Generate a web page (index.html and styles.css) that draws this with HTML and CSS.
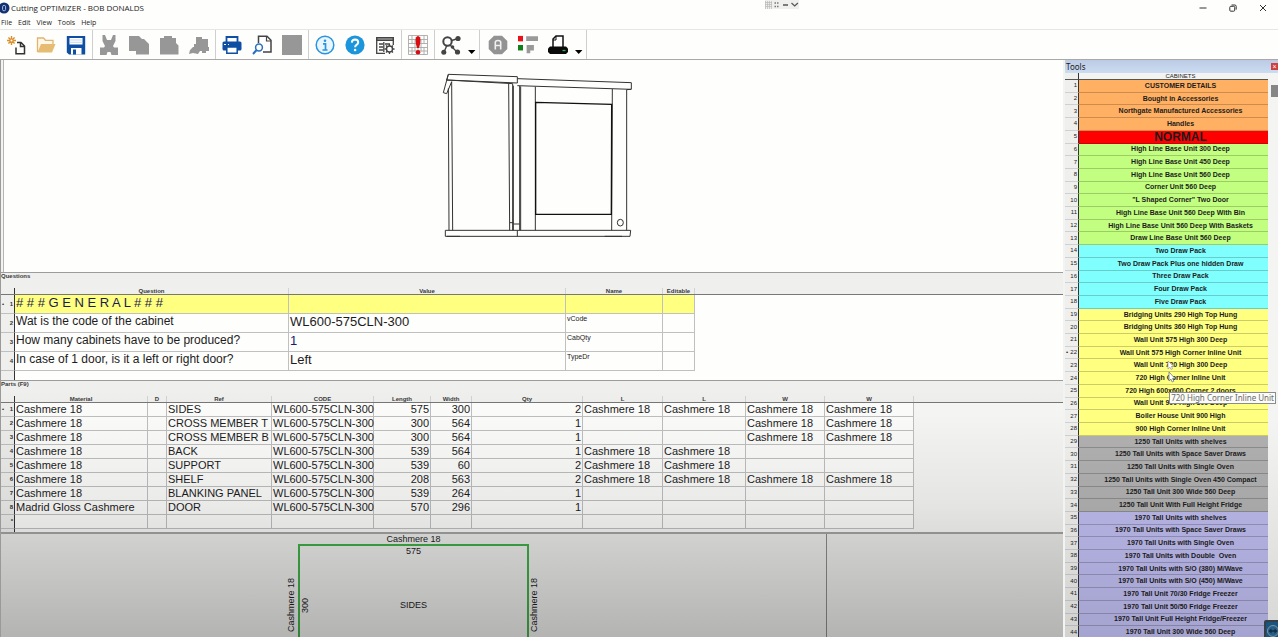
FILE: index.html
```html
<!DOCTYPE html>
<html lang="en">
<head>
<meta charset="utf-8">
<title>Cutting OPTIMIZER - BOB DONALDS</title>
<link rel="stylesheet" href="styles.css">
</head>
<body>
<header class="titlebar">
  <svg class="app-icon" viewBox="0 0 12 12" aria-hidden="true"><circle cx="4" cy="6" r="5.500" fill="#16306e"/><rect x="2.600" y="3.400" width="3" height="5.400" rx="1.400" fill="none" stroke="#9fc0f0" stroke-width="1"/></svg>
  <h1 class="app-title">Cutting OPTIMIZER - BOB DONALDS</h1>
  <div class="share-bar">
    <svg viewBox="0 0 34 9" aria-hidden="true"><rect width="34" height="9" fill="#efefee"/><path d="M.5 1v8M2.500 1v8M4.500 1v8M6.500 1v8M0 2.500h7M0 4.500h7M0 6.500h7" stroke="#b9b9b9" stroke-width=".7"/><path d="M9.500 3h1.500M12 3h1.500M9.500 6.500h1.500M12 6.500h1.500" stroke="#777" stroke-width="1.300"/><path d="M18 5h5" stroke="#555" stroke-width="1.500"/><path d="M26.500 3l3.200 3 3.200-3" fill="none" stroke="#555" stroke-width="1.200"/></svg>
  </div>
  <div class="window-buttons">
    <button class="win-btn" type="button" aria-label="Minimize"><svg viewBox="0 0 8 8"><path d="M.5 4h7" stroke="#333"/></svg></button>
    <button class="win-btn" type="button" aria-label="Restore"><svg viewBox="0 0 8 8" fill="none" stroke="#333"><rect x=".8" y="2.300" width="4.900" height="4.900" rx="1"/><path d="M2.500 1h3.300q1.400 0 1.400 1.400v3.200"/></svg></button>
    <button class="win-btn" type="button" aria-label="Close"><svg viewBox="0 0 8 8"><path d="M1 1l6 6M7 1l-6 6" stroke="#333"/></svg></button>
  </div>
</header>
<nav class="menubar">
  <button type="button">File</button><button type="button">Edit</button><button type="button">View</button><button type="button">Tools</button><button type="button">Help</button>
</nav>
<div class="toolbar" role="toolbar">
  <div class="tool-group">
    <button class="tool" type="button" aria-label="New"><svg viewBox="0 0 20 20"><path d="M10 12.500V18.700h8.500V11l-3.500-3.500h-4M14.500 8v3.500h4" fill="none" stroke="#333" stroke-width="1.500"/><path d="M5.500 1v9M1 5.500h9M2.400 2.400l6.200 6.200M8.600 2.400L2.400 8.600" stroke="#d98f2b" stroke-width="1.400"/><circle cx="5.500" cy="5.500" r="1" fill="#fff"/></svg></button>
    <button class="tool" type="button" aria-label="Open"><svg viewBox="0 0 20 20"><path d="M1.500 17V3h6l2 2.300h7.500V9" fill="#fff8ea" stroke="#e0b56c" stroke-width="1.300"/><path d="M1.500 17.500L5 9h14.500L16 17.500z" fill="#e6bb72"/></svg></button>
    <button class="tool" type="button" aria-label="Save"><svg viewBox="0 0 20 20"><path d="M.8 1h18.400v18.500H3L.8 17.500z" fill="#0f4fa3"/><path d="M3.500 3h13v6.500h-13z" fill="#fff"/><path d="M3.500 5h13M3.500 7.300h13" stroke="#b9cfe8" stroke-width=".8"/><path d="M5 13h10.500v6.500H5z" fill="#fff"/><path d="M7 14.500h3v5H7z" fill="#0f4fa3"/></svg></button>
  </div>
  <div class="tool-group">
    <button class="tool" type="button" disabled aria-label="Cut"><svg viewBox="0 0 20 20"><path d="M3.500 0H6l2 5h4l2-5h2.500v6l-2.500 5 1 1.500h4V20h-6.500l-1-3h-3l-1 3H1v-7.500h4L6 11 3.500 6z" fill="#979797"/></svg></button>
    <button class="tool" type="button" disabled aria-label="Copy"><svg viewBox="0 0 20 20"><path d="M0 1h10l3 3h2l5 5v10.500H7V16H0z" fill="#979797"/></svg></button>
    <button class="tool" type="button" disabled aria-label="Paste"><svg viewBox="0 0 20 20"><path d="M1 3h4V1h8v2h4v5l2.500 2.500v9H1z" fill="#979797"/></svg></button>
    <button class="tool" type="button" disabled aria-label="Format painter"><svg viewBox="0 0 20 20"><path d="M7 2h6v2h6v8h1v4h-3v2h-4v-2h-2l-2 3-5-1-4 1 1-4 3-3h1V9h2z" fill="#979797"/></svg></button>
  </div>
  <div class="tool-group">
    <button class="tool" type="button" aria-label="Print"><svg viewBox="0 0 20 20"><path d="M4.500 7V2h11v5" fill="#fff" stroke="#0f4fa3" stroke-width="1.800"/><rect x=".5" y="6.500" width="19" height="9" rx="1.500" fill="#0f4fa3"/><path d="M2 9.500h2M6 9.500h1" stroke="#fff" stroke-width="1.200"/><path d="M4.800 12h10.400v6.200H4.800z" fill="#fff" stroke="#0f4fa3" stroke-width="1.500"/></svg></button>
    <button class="tool" type="button" aria-label="Print preview"><svg viewBox="0 0 20 20"><path d="M6.500 8V1.300h8.500l4 4V17H11" fill="#fff" stroke="#444" stroke-width="1.500"/><path d="M14.500 1.500V6H19" fill="none" stroke="#444" stroke-width="1.200"/><circle cx="7" cy="12.500" r="3.400" fill="#fff" stroke="#2a6fc0" stroke-width="1.500"/><path d="M4.600 15L1 19" stroke="#2a6fc0" stroke-width="2"/></svg></button>
    <button class="tool" type="button" disabled aria-label="Export"><svg viewBox="0 0 20 20"><path d="M0 0h20v20H0z" fill="#979797"/></svg></button>
  </div>
  <div class="tool-group">
    <button class="tool" type="button" aria-label="Information"><svg viewBox="0 0 20 20"><circle cx="10" cy="10" r="8.800" fill="#e9f6fd" stroke="#2a95dc" stroke-width="1.500"/><circle cx="10" cy="5.800" r="1.300" fill="#2a95dc"/><path d="M8 8.800h2.500v6M7.500 15h5" fill="none" stroke="#2a95dc" stroke-width="1.700"/></svg></button>
    <button class="tool" type="button" aria-label="Help"><svg viewBox="0 0 20 20"><circle cx="10" cy="10" r="9.600" fill="#1b95dc"/><path d="M6.800 7.600q.2-3 3.300-3 3.100.1 3.100 2.700 0 1.500-1.700 2.600-1.400.9-1.400 2.400" fill="none" stroke="#fff" stroke-width="2"/><circle cx="10.100" cy="15" r="1.300" fill="#fff"/></svg></button>
    <button class="tool" type="button" aria-label="Table settings"><svg viewBox="0 0 20 20"><path d="M1 2h18v4H1z" fill="#444"/><path d="M2.500 4h15" stroke="#ddd" stroke-width=".8"/><path d="M18.300 6v4M1.700 6v12.300H10M4 9h4M10 9h5M4 12h4M4 15h4M8.800 7v10" fill="none" stroke="#444" stroke-width="1.300"/><circle cx="14.500" cy="14" r="3" fill="#fff" stroke="#444" stroke-width="1.400"/><path d="M14.500 9v2M14.500 17v2M9.500 14h2M17.500 14h2M11 10.500l1.300 1.300M16.700 16.200l1.300 1.300M11 17.500l1.300-1.300M16.700 11.800l1.300-1.300" stroke="#444" stroke-width="1.300"/></svg></button>
  </div>
  <div class="tool-group">
    <button class="tool" type="button" aria-label="Errors"><svg viewBox="0 0 20 20"><path d="M.5 .5h19v19H.5zM.5 4.500h19M.5 8.500h19M.5 12.500h19M.5 16h19M4 .5v8M7 4.500v12M4 12.500v7M16 .5v8M13 4.500v12M16 12.500v7M10 8v11" fill="none" stroke="#a9a9a9" stroke-width=".9"/><path d="M7.800 2.500Q10-.5 12.200 2.500 13 8 11 13H9Q7 8 7.800 2.500z" fill="#d80d12"/><circle cx="10" cy="17.200" r="2.300" fill="#d80d12"/></svg></button>
  </div>
  <div class="tool-group">
    <button class="tool" type="button" aria-label="Connections"><svg viewBox="0 0 20 20"><path d="M6 7l11-3.500M6 7l10 10M7 8L3 17" stroke="#444" stroke-width="1.400"/><circle cx="6.500" cy="6.500" r="4.200" fill="#fff" stroke="#444" stroke-width="2"/><circle cx="17" cy="3.500" r="2.600" fill="#444"/><circle cx="16.500" cy="17" r="2.600" fill="#444"/><circle cx="2.800" cy="17.200" r="2.500" fill="#444"/><circle cx="11.500" cy="12" r="1.800" fill="#444"/></svg></button>
    <button class="caret" type="button" aria-label="More connections"><svg viewBox="0 0 8 4"><path d="M0 0h7.400L3.700 4z"/></svg></button>
  </div>
  <div class="tool-group tool-group-wide">
    <button class="tool" type="button" disabled aria-label="Automatic"><svg viewBox="0 0 20 20"><path d="M6 .7h8L19.300 6v8L14 19.300H6L.7 14V6z" fill="#939393"/><path d="M7.300 14.500V7.500q0-2 2.700-2t2.700 2v7M7.300 10.500h5.400" fill="none" stroke="#f1f1f1" stroke-width="1.600"/></svg></button>
    <button class="tool" type="button" aria-label="Labels"><svg viewBox="0 0 22 20"><path d="M0 0h5.500v6H0z" fill="#e8121b"/><path d="M0 10h5.500v6H0z" fill="#128018"/><path d="M9 .5h13v5H9zM9.500 10h8v6h-4v3h-4z" fill="#9a9a9a"/></svg></button>
    <button class="tool" type="button" aria-label="Label printer"><svg viewBox="0 0 20 20"><path d="M5 12V4l3-3h7v11" fill="#fff" stroke="#111" stroke-width="1.500"/><path d="M5 5h3V1" fill="none" stroke="#111"/><path d="M2 11.500h16l2 2V17l-2 2H2l-2-2v-3.500z" fill="#0a0a0a"/><path d="M14.500 15.500h3" stroke="#3fb04f" stroke-width="1.300"/></svg></button>
    <button class="caret" type="button" aria-label="More printers"><svg viewBox="0 0 8 4"><path d="M0 0h7.400L3.700 4z"/></svg></button>
  </div>
</div>

<div class="workspace">
  <main class="main">
    <section class="viewer" aria-label="Cabinet view">
      <svg class="cabinet" viewBox="0 0 660 570" fill="none" stroke="#333" stroke-width="3" aria-hidden="true">
        <path d="M55 43L262 50V69L50 60zM55 43L40 98L50 101L65 65M262 56L604 68V88L262 77M50 60L248 71" />
        <path d="M55 85L57 511M65 65L68 511" />
        <path d="M236 70L239 511M248 71V511M250 77V511M269 78V511M250 492H269M240 488H250"/>
        <path d="M272 79V511M316 80V511M547 87L545 511M590 89V511M590 89L603 88"/>
        <path d="M317 127L545 133L544 463L317 463z" stroke="#111" stroke-width="4"/>
        <path d="M46 511H602L600 529H46zM262 511V529M50 529H90M524 529H576"/>
        <ellipse cx="571" cy="488" rx="9" ry="10"/>
      </svg>
    </section>

    <section class="questions">
      <h2 class="pane-title">Questions</h2>
      <div class="grid-area">
        <table class="grid q-grid">
          <colgroup><col class="c-num"><col class="c-question"><col class="c-value"><col class="c-name"><col class="c-edit"></colgroup>
          <thead><tr><th></th><th>Question</th><th>Value</th><th>Name</th><th>Editable</th></tr></thead>
          <tbody>
            <tr class="heading-row"><th class="current">1</th><td># # # G E N E R A L # # #</td><td></td><td></td><td></td></tr>
            <tr><th>2</th><td class="prompt">Wat is the code of the cabinet</td><td>WL600-575CLN-300</td><td class="var">vCode</td><td></td></tr>
            <tr><th>3</th><td class="prompt">How many cabinets have to be produced?</td><td class="edited">1</td><td class="var">CabQty</td><td></td></tr>
            <tr><th>4</th><td class="prompt">In case of 1 door, is it a left or right door?</td><td>Left</td><td class="var">TypeDr</td><td></td></tr>
          </tbody>
        </table>
      </div>
    </section>

    <section class="parts">
      <h2 class="pane-title">Parts (F9)</h2>
      <div class="grid-area">
        <table class="grid p-grid">
          <colgroup><col class="c-num"><col class="c-material"><col class="c-d"><col class="c-ref"><col class="c-code"><col class="c-length"><col class="c-width"><col class="c-qty"><col class="c-l1"><col class="c-l2"><col class="c-w1"><col class="c-w2"></colgroup>
          <thead><tr><th></th><th>Material</th><th>D</th><th>Ref</th><th>CODE</th><th>Length</th><th>Width</th><th>Qty</th><th>L</th><th>L</th><th>W</th><th>W</th></tr></thead>
          <tbody>
            <tr><th class="current">1</th><td>Cashmere 18</td><td></td><td>SIDES</td><td>WL600-575CLN-300</td><td class="n">575</td><td class="n">300</td><td class="n">2</td><td>Cashmere 18</td><td>Cashmere 18</td><td>Cashmere 18</td><td>Cashmere 18</td></tr>
            <tr><th>2</th><td>Cashmere 18</td><td></td><td>CROSS MEMBER T</td><td>WL600-575CLN-300</td><td class="n">300</td><td class="n">564</td><td class="n">1</td><td></td><td></td><td>Cashmere 18</td><td>Cashmere 18</td></tr>
            <tr><th>3</th><td>Cashmere 18</td><td></td><td>CROSS MEMBER B</td><td>WL600-575CLN-300</td><td class="n">300</td><td class="n">564</td><td class="n">1</td><td></td><td></td><td>Cashmere 18</td><td>Cashmere 18</td></tr>
            <tr><th>4</th><td>Cashmere 18</td><td></td><td>BACK</td><td>WL600-575CLN-300</td><td class="n">539</td><td class="n">564</td><td class="n">1</td><td>Cashmere 18</td><td>Cashmere 18</td><td></td><td></td></tr>
            <tr><th>5</th><td>Cashmere 18</td><td></td><td>SUPPORT</td><td>WL600-575CLN-300</td><td class="n">539</td><td class="n">60</td><td class="n">2</td><td>Cashmere 18</td><td>Cashmere 18</td><td></td><td></td></tr>
            <tr><th>6</th><td>Cashmere 18</td><td></td><td>SHELF</td><td>WL600-575CLN-300</td><td class="n">208</td><td class="n">563</td><td class="n">2</td><td>Cashmere 18</td><td>Cashmere 18</td><td>Cashmere 18</td><td>Cashmere 18</td></tr>
            <tr><th>7</th><td>Cashmere 18</td><td></td><td>BLANKING PANEL</td><td>WL600-575CLN-300</td><td class="n">539</td><td class="n">264</td><td class="n">1</td><td></td><td></td><td></td><td></td></tr>
            <tr><th>8</th><td>Madrid Gloss Cashmere</td><td></td><td>DOOR</td><td>WL600-575CLN-300</td><td class="n">570</td><td class="n">296</td><td class="n">1</td><td></td><td></td><td></td><td></td></tr>
            <tr><th class="new-row">*</th><td></td><td></td><td></td><td></td><td></td><td></td><td></td><td></td><td></td><td></td><td></td></tr>
          </tbody>
        </table>
      </div>
    </section>

    <section class="preview" aria-label="Part preview">
      <div class="sheet-pane">
        <div class="sheet">
          <span class="edge-top">Cashmere 18</span>
          <span class="edge-left">Cashmere 18</span>
          <div class="board">
            <span class="dim-length">575</span>
            <span class="dim-width">300</span>
            <span class="part-name">SIDES</span>
          </div>
          <span class="edge-right">Cashmere 18</span>
        </div>
      </div>
      <div class="side-pane"></div>
    </section>
  </main>

  <aside class="tools">
    <div class="tools-title"><h2>Tools</h2><button type="button" aria-label="Close tools">×</button></div>
    <div class="tools-body">
      <table class="cabinets">
        <colgroup><col class="c-index"><col></colgroup>
        <thead><tr><th></th><th>CABINETS</th></tr></thead>
        <tbody class="orange">
          <tr><th>1</th><td>CUSTOMER DETAILS</td></tr>
          <tr><th>2</th><td>Bought in Accessories</td></tr>
          <tr><th>3</th><td>Northgate Manufactured Accessories</td></tr>
          <tr><th>4</th><td>Handles</td></tr>
        </tbody>
        <tbody class="red">
          <tr><th>5</th><td>NORMAL</td></tr>
        </tbody>
        <tbody class="green">
          <tr><th>6</th><td>High Line Base Unit 300 Deep</td></tr>
          <tr><th>7</th><td>High Line Base Unit 450 Deep</td></tr>
          <tr><th>8</th><td>High Line Base Unit 560 Deep</td></tr>
          <tr><th>9</th><td>Corner Unit 560 Deep</td></tr>
          <tr><th>10</th><td>"L Shaped Corner" Two Door</td></tr>
          <tr><th>11</th><td>High Line Base Unit 560 Deep With Bin</td></tr>
          <tr><th>12</th><td>High Line Base Unit 560 Deep With Baskets</td></tr>
          <tr><th>13</th><td>Draw Line Base Unit 560 Deep</td></tr>
        </tbody>
        <tbody class="cyan">
          <tr><th>14</th><td>Two Draw Pack</td></tr>
          <tr><th>15</th><td>Two Draw Pack Plus one hidden Draw</td></tr>
          <tr><th>16</th><td>Three Draw Pack</td></tr>
          <tr><th>17</th><td>Four Draw Pack</td></tr>
          <tr><th>18</th><td>Five Draw Pack</td></tr>
        </tbody>
        <tbody class="yellow">
          <tr><th>19</th><td>Bridging Units 290 High Top Hung</td></tr>
          <tr><th>20</th><td>Bridging Units 360 High Top Hung</td></tr>
          <tr><th>21</th><td>Wall Unit 575 High 300 Deep</td></tr>
          <tr><th class="current">22</th><td>Wall Unit 575 High Corner Inline Unit</td></tr>
          <tr><th>23</th><td>Wall Unit 720 High 300 Deep</td></tr>
          <tr><th>24</th><td class="hovered">720 High Corner Inline Unit
            <svg class="pointer" viewBox="0 0 10 22" aria-hidden="true"><path d="M1 0v8l2-1.800 1 2.200 1.500-.7-1-2.200H7z" fill="#fff" stroke="#999" stroke-width=".7"/><path d="M2 11v9l2-1.800L5.200 21l1.600-.8-1.200-2.700H8z" fill="#fff" stroke="#777" stroke-width=".8"/></svg>
            <span class="tooltip" role="tooltip">720 High Corner Inline Unit</span></td></tr>
          <tr><th>25</th><td>720 High 600x600 Corner 2 doors</td></tr>
          <tr><th>26</th><td>Wall Unit 900 High 300 Deep</td></tr>
          <tr><th>27</th><td>Boiler House Unit 900 High</td></tr>
          <tr><th>28</th><td>900 High Corner Inline Unit</td></tr>
        </tbody>
        <tbody class="gray">
          <tr><th>29</th><td>1250 Tall Units with shelves</td></tr>
          <tr><th>30</th><td>1250 Tall Units with Space Saver Draws</td></tr>
          <tr><th>31</th><td>1250 Tall Units with Single Oven</td></tr>
          <tr><th>32</th><td>1250 Tall Units with Single Oven 450 Compact</td></tr>
          <tr><th>33</th><td>1250 Tall Unit 300 Wide 560 Deep</td></tr>
          <tr><th>34</th><td>1250 Tall Unit With Full Height Fridge</td></tr>
        </tbody>
        <tbody class="lilac">
          <tr><th>35</th><td>1970 Tall Units with shelves</td></tr>
          <tr><th>36</th><td>1970 Tall Units with Space Saver Draws</td></tr>
          <tr><th>37</th><td>1970 Tall Units with Single Oven</td></tr>
          <tr><th>38</th><td>1970 Tall Units with Double&nbsp; Oven</td></tr>
          <tr><th>39</th><td>1970 Tall Units with S/O (380) M/Wave</td></tr>
          <tr><th>40</th><td>1970 Tall Units with S/O (450) M/Wave</td></tr>
          <tr><th>41</th><td>1970 Tall Unit 70/30 Fridge Freezer</td></tr>
          <tr><th>42</th><td>1970 Tall Unit 50/50 Fridge Freezer</td></tr>
          <tr><th>43</th><td>1970 Tall Unit Full Height Fridge/Freezer</td></tr>
          <tr><th>44</th><td>1970 Tall Unit 300 Wide 560 Deep</td></tr>
        </tbody>
      </table>
      <div class="scrollbar"><div class="thumb"></div></div>
    </div>
    <svg class="remote-badge" viewBox="0 0 14 17" aria-hidden="true"><path d="M0 17V2q0-2 2-2h12v17z" fill="#3d4852"/><path d="M2 17V4q0-2 2-2h10v15z" fill="#1e5f8e"/><circle cx="9" cy="11" r="5.500" fill="#2a6c9b" stroke="#8fa9ba"/><path d="M4.500 11l3-2.500v1.700h3V8.500l3 2.500-3 2.500v-1.700h-3v1.700z" fill="#16304a"/></svg>
  </aside>
</div>
</body>
</html>
```
FILE: styles.css
```css
* { box-sizing: border-box; }

body {
  margin: 0;
  height: 100vh;
  display: flex;
  flex-direction: column;
  overflow: hidden;
  background: #fefefc;
  color: #1c1c1c;
  font-family: "Liberation Sans", Arial, sans-serif;
}

button {
  margin: 0;
  padding: 0;
  border: 0;
  background: none;
  font: inherit;
  color: inherit;
}

svg { display: block; }

h1, h2 { margin: 0; font-weight: normal; }

/* Title bar and menu */
.titlebar {
  display: grid;
  grid-template-columns: 11px 11fr 34px 7fr;
  height: 15px;
  flex: none;
}
.app-icon { width: 12px; height: 12px; align-self: center; }
.app-title { font: 8px/15px "Open Sans", sans-serif; }
.share-bar svg { width: 34px; height: 9px; }
.window-buttons { display: flex; justify-content: flex-end; }
.win-btn {
  width: 30px;
  display: flex;
  align-items: center;
  justify-content: center;
}
.win-btn svg { width: 8px; height: 8px; }

.menubar {
  display: flex;
  gap: 6px;
  padding-left: 1px;
  height: 15px;
  flex: none;
  border-bottom: 1px solid #e6e6e4;
  font: 7px/15px "Open Sans", sans-serif;
}

/* Toolbar */
.toolbar {
  display: flex;
  height: 30px;
  flex: none;
  border-bottom: 1px solid #a9a9a9;
}
.tool-group {
  display: flex;
  padding: 0 1px;
  border-right: 1px solid #cfcfcf;
}
.tool-group-wide { padding-left: 3px; }
.tool {
  width: 30px;
  display: flex;
  align-items: center;
  justify-content: center;
}
.tool svg { width: 20px; height: 20px; }
.caret {
  width: 12px;
  display: flex;
  align-items: flex-end;
  justify-content: center;
  padding-bottom: 5px;
}
.caret svg { width: 8px; height: 4px; }

/* Work area */
.workspace {
  flex: 1;
  min-height: 0;
  display: grid;
  grid-template-columns: 1fr 213px;
  grid-template-rows: minmax(0, 1fr);
  gap: 2px;
  background: #f3f3f1;
}
.main {
  position: relative;
  display: flex;
  flex-direction: column;
  min-width: 0;
  border-left: 1px solid #9a9a9a;
}
.main::after,
.tools::after {
  content: "";
  position: absolute;
  inset: 0;
  pointer-events: none;
}
.main::after { background: linear-gradient(transparent 57%, rgba(0, 0, 0, .08) 77%, rgba(0, 0, 0, .24)); }
.tools::after { background: linear-gradient(transparent 62%, rgba(0, 0, 0, .12)); }

.viewer {
  flex: 43;
  min-height: 0;
  display: flex;
  justify-content: center;
  padding-left: 12px;
  margin-left: 2px;
  border-left: 1px solid #b5b5b5;
  background: #fefefc;
}
.cabinet { width: 220px; height: 190px; }

/* Panes with grids */
.questions, .parts {
  display: flex;
  flex-direction: column;
  flex: none;
  border-top: 1px solid #9c9c9c;
  background: #efefee;
}
.questions { height: 108px; }
.parts { height: 152px; }
.pane-title {
  font-size: 6px;
  font-weight: bold;
  line-height: 7px;
  color: #3a3a3a;
  height: 15px;
}
.grid-area { position: relative; flex: 1; overflow: hidden; }
.questions .grid-area {
  background: linear-gradient(to right, #efefee 13px, #333 13px, #333 14px, transparent 14px) no-repeat, linear-gradient(#efefee 7px, #fefefc 7px);
}
.parts .grid-area {
  background: linear-gradient(to right, #efefee 13px, #333 13px, #333 14px, transparent 14px) no-repeat, linear-gradient(#efefee 7px, #f8f8f7 7px);
}
.grid-area::before {
  content: "";
  position: absolute;
  inset: 6px 0 auto;
  border-top: 1px solid #777;
}
.grid, .cabinets {
  table-layout: fixed;
  border-collapse: separate;
  border-spacing: 0;
}
.grid { width: 0; }
.grid th, .grid td {
  padding: 0;
  white-space: nowrap;
  border-right: 1px solid #c0c0c0;
  border-bottom: 1px solid #c0c0c0;
}
.grid thead th {
  height: 7px;
  font-size: 6px;
  line-height: 6px;
  color: #3a3a3a;
  border-right-color: #d2d2d2;
  border-bottom-color: #555;
}
.grid tr > th:first-child, .cabinets tr > th:first-child {
  text-align: right;
  background: #efefee;
  border-right: 1px solid #333;
}
.grid tbody th {
  font-size: 6px;
  color: #333;
  padding-right: 1px;
}
.current::before {
  content: "•";
  float: left;
  padding-left: 1px;
}
.grid .new-row { text-align: center; }
.grid td { text-align: left; padding-left: 1px; background: #fefefc; }
.grid .n { text-align: right; padding-right: 1px; }

.c-num { width: 14px; }
.c-question { width: 274px; }
.c-value { width: 277px; }
.c-name { width: 97px; }
.c-edit { width: 32px; }
.q-grid td {
  height: 19px;
  font-size: 13px;
  line-height: 15px;
  vertical-align: top;
}
.q-grid .prompt { font-size: 12px; }
.q-grid .var { font-size: 7px; line-height: 10px; }
.q-grid .heading-row td { background: #ffff80; color: #1b1b50; }
.q-grid .edited { color: #1b1b70; }

.c-material { width: 133px; }
.c-d { width: 19px; }
.c-ref { width: 105px; }
.c-code { width: 102px; }
.c-length { width: 57px; }
.c-width { width: 41px; }
.c-qty { width: 111px; }
.c-l1 { width: 80px; }
.c-l2 { width: 83px; }
.c-w1 { width: 79px; }
.c-w2 { width: 89px; }
.p-grid td {
  height: 14px;
  font-size: 11px;
  line-height: 13px;
}

/* Part preview */
.preview {
  flex: 21;
  min-height: 0;
  display: flex;
  border-top: 2px solid #a3a3a3;
  background: #ececeb;
  overflow: hidden;
}
.sheet-pane {
  flex: 7;
  display: flex;
  justify-content: center;
  border-right: 1px solid #8a8a8a;
}
.side-pane { flex: 2; }
.sheet {
  display: grid;
  grid-template-columns: 12px 231px 12px;
  grid-template-rows: 10px 122px;
  align-content: start;
  font-size: 9px;
  line-height: 10px;
}
.edge-top { grid-column: 2; text-align: center; }
.edge-left, .edge-right, .dim-width {
  writing-mode: vertical-rl;
  transform: rotate(180deg);
  text-align: center;
}
.edge-left { grid-column: 1; }
.board {
  display: grid;
  grid-template-columns: 12px 1fr 12px;
  grid-template-rows: 10px 1fr 10px;
  border: 2px solid #3fae46;
}
.dim-length { grid-area: 1 / 2; text-align: center; }
.dim-width { grid-area: 2 / 1; }
.part-name { grid-area: 2 / 2; place-self: center; }

/* Tools panel */
.tools {
  position: relative;
  display: flex;
  flex-direction: column;
  min-height: 0;
  overflow: hidden;
}
.tools-title {
  display: flex;
  justify-content: space-between;
  align-items: center;
  height: 13px;
  flex: none;
  padding-left: 1px;
  background: linear-gradient(#bccbe3, #cbdcf2);
}
.tools-title h2 { font: 8px/12px "Noto Sans", sans-serif; }
.tools-title button {
  width: 7px;
  height: 7px;
  background: #cf4141;
  color: #fff;
  font-size: 7px;
  line-height: 7px;
}
.tools-body {
  flex: 1;
  min-height: 0;
  display: grid;
  grid-template-columns: 1fr 10px;
  grid-template-rows: 100%;
}
.cabinets { width: 100%; height: calc(100% + 2px); }
.c-index { width: 14px; }
.cabinets th, .cabinets td { padding: 0; white-space: nowrap; }
.cabinets tr > :last-child { padding-left: 14px; }
.cabinets thead th {
  height: 7px;
  font-size: 6px;
  line-height: 6px;
  font-weight: normal;
  border-bottom: 1px solid #555;
}
.cabinets tbody th {
  font-size: 6px;
  line-height: 7px;
  font-weight: normal;
  padding-right: 1px;
  color: #222;
  border-bottom: 1px solid #d0d0d0;
}
.cabinets td {
  text-align: center;
  font-size: 7px;
  line-height: 8px;
  font-weight: bold;
  border-bottom: 1px solid rgba(0, 0, 0, .2);
}
.orange td { background: #ffb062; }
.red td { background: #ff0000; font-size: 12px; }
.green td { background: #c2ff80; }
.cyan td { background: #80ffff; }
.yellow td { background: #ffff80; }
.gray td { background: #b0b0b0; }
.lilac td { background: #bcbaec; }

.hovered { position: relative; }
.pointer {
  position: absolute;
  left: 88px;
  top: -11px;
  width: 10px;
  height: 22px;
}
.tooltip {
  position: absolute;
  z-index: 1;
  right: -8px;
  top: 20px;
  padding: 0 1px;
  border: 1px solid #8c8c8c;
  background: #fbfbf8;
  color: #6a6a6a;
  font: 8px/10px "Noto Sans", sans-serif;
}
.scrollbar { padding: 12px 0 0 3px; background: #f4f4f3; }
.thumb { height: 12px; background: #868686; }
.remote-badge {
  position: absolute;
  right: 0;
  bottom: 0;
  width: 14px;
  height: 17px;
}
```
